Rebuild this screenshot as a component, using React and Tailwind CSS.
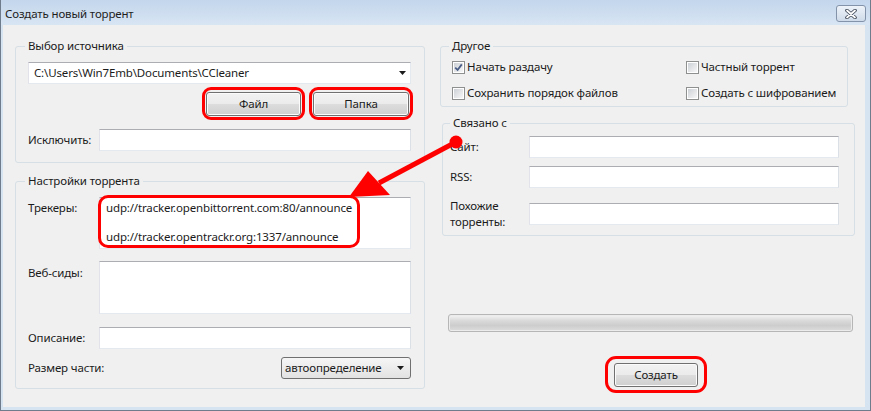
import {useState} from "react";

// Checkbox in Windows 7 style
function CheckBox({checked, label}){
    return(
        <div className="flex items-center gap-[2px] h-[16px]">
            <span className="w-[13px] h-[13px] border border-[#8e8f8f] bg-white p-[1px] shrink-0">
                <span className="relative block w-full h-full bg-gradient-to-br from-[#cdd1d6] to-[#f7f7f7]">
                    {checked && (
                        <svg viewBox="0 0 9 9" className="absolute inset-0 w-full h-full">
                            <path d="M1.2 4.6 L3.6 7 L7.8 1.4" fill="none" stroke="#4a5d86" strokeWidth="1.8"/>
                        </svg>
                    )}
                </span>
            </span>
            <span>{label}</span>
        </div>
    )
}

// Text input
function TextBox({className = ""}){
    return <div className={`h-[22px] bg-white border border-[#e3e9ef] border-t-[#abadb3] border-l-[#e2e3ea] border-r-[#dbdfe6] ${className}`}/>
}

// Gray push button
function PushButton({children, className = ""}){
    return(
        <div className={`flex items-center justify-center rounded-[3px] border border-[#707070] bg-[linear-gradient(#f2f2f2,#ebebeb_50%,#dddddd_50%,#cfcfcf)] shadow-[inset_0_0_0_1px_#fbfbfb] ${className}`}>
            {children}
        </div>
    )
}

// Small dropdown triangle
function DropArrow(){
    return(
        <svg viewBox="0 0 7 4" className="w-[7px] h-[4px]">
            <path d="M0 0 H7 L3.5 4 Z" fill="#1b1b1b"/>
        </svg>
    )
}

function App(){

    const [startSeeding, setStartSeeding] = useState(true)

    return(
        <div className="relative w-[871px] h-[411px] overflow-hidden flex flex-col bg-[#d6e3f1] border border-t-0 border-[#6f7c8c] text-[11.5px] tracking-[-0.15px] leading-[16px] text-[#1b1b1b] font-['Noto_Sans',sans-serif]">

            {/*  Title Bar  */}
            <div className="h-[25px] shrink-0 flex justify-between bg-gradient-to-b from-[#c3d6ec] to-[#d8e5f3]">
                <h1 className="self-center pl-[4px] pt-[2px] text-[#1e1e1e]">Создать новый торрент</h1>
                <div className="mt-[5px] mr-[4px] w-[30px] h-[17px] rounded-[3px] border border-[#8394aa] bg-gradient-to-b from-[#eef3f9] to-[#cfdbea] flex items-center justify-center">
                    <svg viewBox="0 0 12 10" className="w-[12px] h-[10px]">
                        <path d="M2 1.5 L10 8.5 M10 1.5 L2 8.5" stroke="#3f4856" strokeWidth="3.6" strokeLinecap="round"/>
                        <path d="M2 1.5 L10 8.5 M10 1.5 L2 8.5" stroke="#ffffff" strokeWidth="1.8" strokeLinecap="round"/>
                    </svg>
                </div>
            </div>

            {/*  Client Area  */}
            <div className="flex-1 ml-[2px] mr-[5px] mb-[3px] bg-[#f0f0f0] flex items-start gap-[15px] pt-[13px] pl-[12px]">

                {/*  Left Column  */}
                <div className="w-[410px] flex flex-col">

                    {/*  Source  */}
                    <fieldset className="border border-[#d5dfe5] rounded-[3px] pl-[12px] pr-[13px] pb-[11px]">
                        <legend className="-ml-[3px] px-[3px]">Выбор источника</legend>

                        {/*  Path Combo  */}
                        <div className="mt-[8px] h-[22px] bg-white border border-[#e3e9ef] border-t-[#abadb3] border-l-[#e2e3ea] flex items-center justify-between pl-[5px] pr-[4px]">
                            <span>C:\Users\Win7Emb\Documents\CCleaner</span>
                            <DropArrow/>
                        </div>

                        {/*  File / Folder Buttons  */}
                        <div className="mt-[3px] -mr-[2px] flex justify-end gap-[4px]">
                            <div className="w-[103px] h-[33px] rounded-[9px] border-[3px] border-[#f00] flex items-center justify-center">
                                <PushButton className="w-[95px] h-[24px]">Файл</PushButton>
                            </div>
                            <div className="w-[104px] h-[33px] rounded-[9px] border-[3px] border-[#f00] flex items-center justify-center">
                                <PushButton className="w-[96px] h-[24px]">Папка</PushButton>
                            </div>
                        </div>

                        {/*  Exclude  */}
                        <div className="mt-[9px] flex items-center">
                            <span className="w-[71px] shrink-0">Исключить:</span>
                            <TextBox className="flex-1"/>
                        </div>
                    </fieldset>

                    {/*  Torrent Settings  */}
                    <fieldset className="mt-[10px] border border-[#d5dfe5] rounded-[3px] pl-[12px] pr-[13px] pb-[9px]">
                        <legend className="-ml-[3px] px-[3px]">Настройки торрента</legend>

                        {/*  Trackers  */}
                        <div className="mt-[8px] flex items-start">
                            <span className="w-[71px] shrink-0 pt-[3px]">Трекеры:</span>
                            <div className="relative flex-1 h-[52px] bg-white border border-[#e3e9ef] border-t-[#abadb3] border-l-[#e2e3ea] pl-[6px] pt-[3px] leading-[14.5px] whitespace-pre">
                                {"udp://tracker.openbittorrent.com:80/announce\n\nudp://tracker.opentrackr.org:1337/announce"}
                                <div className="absolute -left-[2px] -top-[3px] w-[262px] h-[53px] rounded-[10px] border-[3px] border-[#f00]"/>
                            </div>
                        </div>

                        {/*  Web Seeds  */}
                        <div className="mt-[12px] flex items-start">
                            <span className="w-[71px] shrink-0 pt-[4px]">Веб-сиды:</span>
                            <TextBox className="flex-1 !h-[53px]"/>
                        </div>

                        {/*  Description  */}
                        <div className="mt-[13px] flex items-center">
                            <span className="w-[71px] shrink-0">Описание:</span>
                            <TextBox className="flex-1"/>
                        </div>

                        {/*  Piece Size  */}
                        <div className="mt-[8px] flex items-center">
                            <span>Размер части:</span>
                            <div className="ml-auto w-[130px] h-[22px] rounded-[3px] border border-[#707070] bg-gradient-to-b from-[#f6f6f6] to-[#e2e2e2] flex items-center justify-between pl-[3px] pr-[6px]">
                                <span>автоопределение</span>
                                <DropArrow/>
                            </div>
                        </div>
                    </fieldset>
                </div>

                {/*  Right Column  */}
                <div className="w-[415px] flex flex-col">

                    {/*  Other  */}
                    <fieldset className="w-[408px] border border-[#d5dfe5] rounded-[3px] pl-[11px] pt-[5px] pb-[5px]">
                        <legend className="-ml-[3px] px-[3px]">Другое</legend>
                        <div className="grid grid-cols-[234px_1fr] gap-y-[10px]" onClick={()=>setStartSeeding(!startSeeding)}>
                            <CheckBox checked={startSeeding} label="Начать раздачу"/>
                            <CheckBox label="Частный торрент"/>
                            <CheckBox label="Сохранить порядок файлов"/>
                            <CheckBox label="Создать с шифрованием"/>
                        </div>
                    </fieldset>

                    {/*  Related  */}
                    <fieldset className="mt-[8px] ml-[2px] w-[413px] border border-[#d5dfe5] rounded-[3px] pl-[7px] pr-[15px] pt-[5px] pb-[6px]">
                        <legend className="ml-0 px-[3px]">Связано с</legend>
                        <div className="flex items-center">
                            <span className="w-[79px] shrink-0">Сайт:</span>
                            <TextBox className="flex-1"/>
                        </div>
                        <div className="mt-[8px] flex items-center">
                            <span className="w-[79px] shrink-0">RSS:</span>
                            <TextBox className="flex-1"/>
                        </div>
                        <div className="mt-[10px] flex items-center">
                            <span className="w-[79px] shrink-0 leading-[15.5px]">Похожие<br/>торренты:</span>
                            <TextBox className="flex-1"/>
                        </div>
                    </fieldset>

                    {/*  Progress  */}
                    <div className="mt-[78px] ml-[8px] w-[405px] h-[18px] rounded-[3px] border border-[#b6b6b6] bg-[linear-gradient(#f4f4f4,#dadada_35%,#cdcdcd_65%,#dcdcdc)] shadow-[inset_0_0_0_1px_#ececec]"/>

                    {/*  Create Button  */}
                    <div className="mt-[24px] ml-[165px] w-[102px] h-[37px] rounded-[11px] border-[3px] border-[#f00] flex items-center justify-center">
                        <PushButton className="w-[84px] h-[24px]">Создать</PushButton>
                    </div>
                </div>
            </div>

            {/*  Annotation Arrow  */}
            <svg viewBox="0 0 871 411" className="absolute inset-0 w-[871px] h-[411px] pointer-events-none">
                <line x1="455" y1="142" x2="378" y2="183" stroke="#f00" strokeWidth="5"/>
                <polygon points="348,197 367,171 389,195" fill="#f00"/>
                <circle cx="455" cy="142" r="6.5" fill="#f00"/>
            </svg>
        </div>
    )
}

export default App;
